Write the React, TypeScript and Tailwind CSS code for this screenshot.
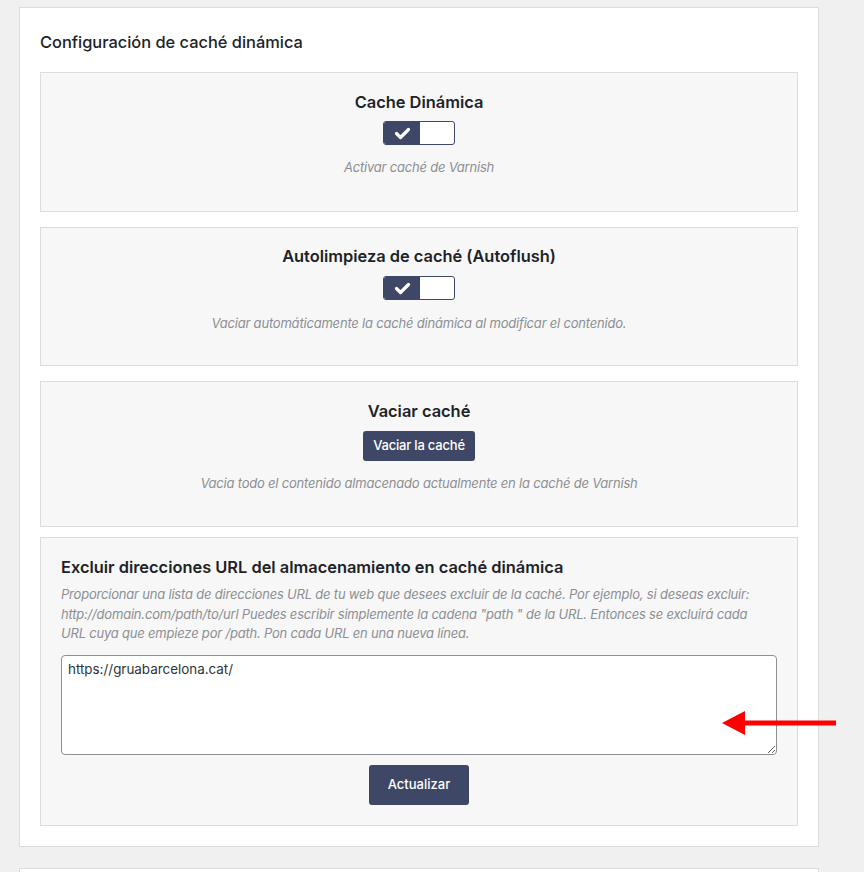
const font = { fontFamily: "Inter, 'Noto Sans', sans-serif" };

function Toggle() {
    return (
        <div className="mx-auto flex h-6 w-[72px] overflow-hidden rounded-[3px] border border-[#3e4766] bg-white">
            <div className="flex w-9 items-center justify-center bg-[#3e4766]">
                <svg width="17" height="13" viewBox="0 0 17 13">
                    <polyline points="2.5,6.5 6.5,10.5 14.5,2.5" fill="none" stroke="#fff" strokeWidth="3.2" strokeLinecap="round" strokeLinejoin="round" />
                </svg>
            </div>
            <div className="flex-1" />
        </div>
    );
}

function Hint({ children }: { children: React.ReactNode }) {
    return <p className="text-center text-[13px] italic leading-5 tracking-[-0.2px] text-[#8c8f94]">{children}</p>;
}

export default function App() {
    return (
        <div className="relative min-h-[872px] bg-[#f0f0f1] pt-[7px] text-[#1d2327]" style={font}>
            <div className="ml-[19px] w-[800px] border border-[#dcdcde] bg-white px-5 pb-5">
                <h2 className="mt-[22px] text-[16.4px] font-medium leading-6">Configuración de caché dinámica</h2>

                {/* Cache dinámica */}
                <div className="mt-[18px] h-[140px] border border-[#dcdcde] bg-[#f7f7f7] pt-[17px]">
                    <h3 className="text-center text-[16.4px] font-semibold leading-6">Cache Dinámica</h3>
                    <div className="mt-[7px]">
                        <Toggle />
                    </div>
                    <div className="mt-3">
                        <Hint>Activar caché de Varnish</Hint>
                    </div>
                </div>

                {/* Autoflush */}
                <div className="mt-[15px] h-[139px] border border-[#dcdcde] bg-[#f7f7f7] pt-4">
                    <h3 className="text-center text-[16.4px] font-semibold leading-6">Autolimpieza de caché (Autoflush)</h3>
                    <div className="mt-2">
                        <Toggle />
                    </div>
                    <div className="mt-[13px]">
                        <Hint>Vaciar automáticamente la caché dinámica al modificar el contenido.</Hint>
                    </div>
                </div>

                {/* Vaciar */}
                <div className="mt-[15px] h-[146px] border border-[#dcdcde] bg-[#f7f7f7] pt-[17px]">
                    <h3 className="text-center text-[16.4px] font-semibold leading-6">Vaciar caché</h3>
                    <div className="mt-2 flex justify-center">
                        <button className="h-[30px] w-28 rounded-[3px] bg-[#3e4766] text-[13px] font-medium tracking-[-0.2px] text-white">
                            Vaciar la caché
                        </button>
                    </div>
                    <div className="mt-3">
                        <Hint>Vacia todo el contenido almacenado actualmente en la caché de Varnish</Hint>
                    </div>
                </div>

                {/* Excluir */}
                <div className="mt-[10px] border border-[#dcdcde] bg-[#f7f7f7] px-5 pb-5 pt-[17px]">
                    <h3 className="text-[16.4px] font-semibold leading-6">
                        Excluir direcciones URL del almacenamiento en caché dinámica
                    </h3>
                    <p className="mt-[6px] pr-2 text-[13px] italic leading-[19.5px] tracking-[-0.2px] text-[#8c8f94]">
                        Proporcionar una lista de direcciones URL de tu web que desees excluir de la caché. Por ejemplo, si deseas excluir: http://domain.com/path/to/url Puedes escribir simplemente la cadena "path " de la URL. Entonces se excluirá cada URL cuya que empieze por /path. Pon cada URL en una nueva línea.
                    </p>
                    <textarea
                        className="mt-[11px] block h-[100px] w-full rounded-[4px] border border-[#8c8f94] bg-white px-[6px] py-[3px] text-[13.4px] leading-5 text-[#2c3338] outline-none"
                        defaultValue="https://gruabarcelona.cat/"
                        style={font}
                    />
                    <div className="mt-[10px] flex justify-center">
                        <button className="h-10 w-[100px] rounded-[3px] bg-[#3e4766] text-[13px] font-medium text-white">
                            Actualizar
                        </button>
                    </div>
                </div>
            </div>

            <div className="ml-[19px] mt-[21px] h-10 w-[800px] border border-[#dcdcde] bg-white" />

            {/* red arrow annotation */}
            <svg className="absolute left-[718px] top-[706px]" width="122" height="34" viewBox="0 0 122 34">
                <polygon points="4,17 27,5 27,29" fill="#ff0000" />
                <rect x="24" y="14.5" width="94" height="5" fill="#ff0000" />
            </svg>
        </div>
    );
}
